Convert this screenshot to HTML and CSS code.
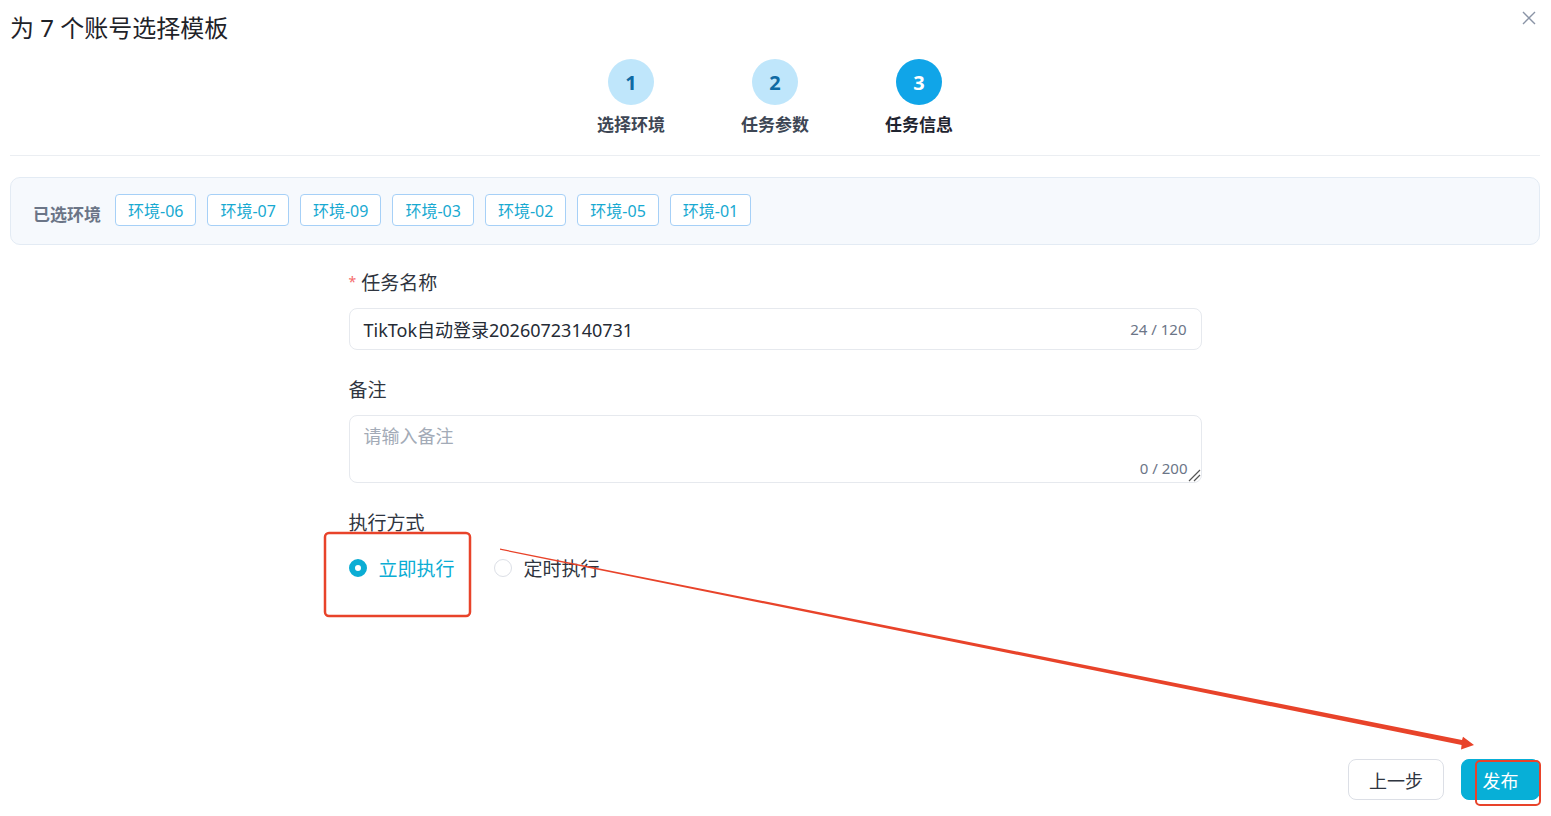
FILE: index.html
```html
<!DOCTYPE html>
<html lang="zh-CN">
<head>
    <meta charset="UTF-8">
    <meta name="viewport" content="width=device-width, initial-scale=1.0">
    <title>为 7 个账号选择模板</title>
    <link rel="stylesheet" href="styles.css">
</head>
<body>
    <div class="page">
        <div class="title-row">
            <h1 class="title">为 7 个账号选择模板</h1>
            <svg class="close" width="14" height="14" viewBox="0 0 14 14"><path d="M1 1L13 13M13 1L1 13" stroke="#8a94a6" stroke-width="1.4" fill="none"/></svg>
        </div>

        <div class="steps">
            <div class="step"><div class="step-num">1</div><div class="step-label">选择环境</div></div>
            <div class="step"><div class="step-num">2</div><div class="step-label">任务参数</div></div>
            <div class="step active"><div class="step-num">3</div><div class="step-label">任务信息</div></div>
        </div>

        <div class="env-box">
            <span class="env-label">已选环境</span>
            <div class="tags">
                <span class="tag">环境-06</span>
                <span class="tag">环境-07</span>
                <span class="tag">环境-09</span>
                <span class="tag">环境-03</span>
                <span class="tag">环境-02</span>
                <span class="tag">环境-05</span>
                <span class="tag">环境-01</span>
            </div>
        </div>

        <div class="form">
            <div class="field">
                <div class="field-label"><span class="required">*</span>任务名称</div>
                <div class="input">
                    <span class="input-text">TikTok自动登录20260723140731</span>
                    <span class="count">24 / 120</span>
                </div>
            </div>
            <div class="field">
                <div class="field-label">备注</div>
                <div class="textarea">
                    <span class="placeholder">请输入备注</span>
                    <span class="count">0 / 200</span>
                    <svg class="grip" width="14" height="14" viewBox="0 0 14 14"><path d="M13 2L2 13M13 7L7 13" stroke="#555" stroke-width="1.2" fill="none"/></svg>
                </div>
            </div>
            <div class="field">
                <div class="field-label">执行方式</div>
                <div class="radios">
                    <span class="radio checked"><span class="dot"></span>立即执行</span>
                    <span class="radio"><span class="dot"></span>定时执行</span>
                </div>
            </div>
        </div>

        <div class="footer">
            <button class="btn">上一步</button>
            <button class="btn primary">发布</button>
        </div>

        <svg class="marks" width="1551" height="816" viewBox="0 0 1551 816">
            <rect x="325" y="533" width="145" height="83" rx="4" fill="none" stroke="#e8432a" stroke-width="2.5"/>
            <rect x="1476" y="761" width="64" height="44" rx="4" fill="none" stroke="#e8432a" stroke-width="2"/>
            <polygon points="500,548.6 1462,740 1463,736.8 1474,745 1461,749.6 1461.6,745 500,549.8" fill="#e8432a"/>
        </svg>
    </div>
</body>
</html>
```

FILE: styles.css
```css
* { box-sizing: border-box; margin: 0; padding: 0; }
body {
    font-family: "Noto Sans", "Noto Sans CJK SC", sans-serif;
    color: #2f3540;
    background: #fff;
}
.page {
    position: relative;
    height: 816px;
    display: flex;
    flex-direction: column;
    padding: 0 11px 16px 10px;
    overflow: hidden;
}
.title-row {
    display: flex;
    justify-content: space-between;
    align-items: flex-start;
    padding-top: 10px;
}
.title {
    font-size: 24px;
    font-weight: 400;
    line-height: 36px;
    color: #1f2329;
}
.close { margin-top: 1px; margin-right: 4px; }

.steps {
    display: flex;
    justify-content: center;
    margin-top: 13px;
    padding-bottom: 19px;
    border-bottom: 1px solid #ebeef2;
}
.step {
    width: 144px;
    display: flex;
    flex-direction: column;
    align-items: center;
}
.step-num {
    width: 46px;
    height: 46px;
    border-radius: 50%;
    background: #bfe6fb;
    color: #0f6aa3;
    font-size: 20px;
    font-weight: 700;
    display: flex;
    align-items: center;
    justify-content: center;
}
.step-label {
    margin-top: 9px;
    font-size: 17px;
    font-weight: 700;
    line-height: 22px;
    color: #3d4654;
}
.step.active .step-num { background: #10a5e8; color: #fff; }
.step.active .step-label { color: #1f2430; }

.env-box {
    margin-top: 21px;
    display: flex;
    align-items: center;
    padding: 16px 22px 18px;
    background: #f6f9fd;
    border: 1px solid #e3ebf4;
    border-radius: 10px;
}
.env-label {
    font-size: 17px;
    font-weight: 700;
    color: #6b7587;
    line-height: 22px;
    padding-top: 10px;
    margin-right: 14px;
}
.tags { display: flex; gap: 11px; }
.tag {
    height: 32px;
    padding: 0 12px;
    display: flex;
    align-items: center;
    font-size: 16px;
    color: #17a9d1;
    background: #fff;
    border: 1px solid #a6d0f7;
    border-radius: 4px;
}

.form {
    width: 853px;
    margin: 25px auto 0;
}
.field { margin-bottom: 28px; }
.field-label {
    font-size: 19px;
    line-height: 24px;
    color: #2f3540;
    margin-bottom: 13px;
}
.required {
    color: #f56c6c;
    font-size: 14px;
    margin-right: 5px;
    vertical-align: 3px;
}
.input {
    height: 42px;
    border: 1px solid #e6e9ee;
    border-radius: 8px;
    display: flex;
    align-items: center;
    justify-content: space-between;
    padding: 0 14px;
}
.input-text { font-size: 18px; color: #252b35; }
.count { font-size: 15px; color: #6b7587; }
.textarea {
    position: relative;
    height: 68px;
    border: 1px solid #e6e9ee;
    border-radius: 8px;
    display: flex;
    flex-direction: column;
    justify-content: space-between;
    padding: 8px 13px 4px 14px;
}
.placeholder { font-size: 18px; line-height: 24px; color: #a3abb7; }
.textarea .count { align-self: flex-end; line-height: 20px; }
.grip { position: absolute; right: 0; bottom: 0; }

.radios { display: flex; align-items: center; height: 34px; margin-top: 16px; }
.radio {
    display: inline-flex;
    align-items: center;
    gap: 12px;
    font-size: 19px;
    color: #2f3540;
    margin-right: 39px;
}
.radio .dot {
    width: 18px;
    height: 18px;
    border-radius: 50%;
    border: 1px solid #dcdfe6;
    background: #fff;
}
.radio.checked { color: #0badd4; }
.radio.checked .dot {
    border: 6px solid #0badd4;
    background: #fff;
}

.footer {
    margin-top: auto;
    display: flex;
    justify-content: flex-end;
    gap: 17px;
}
.btn {
    height: 41px;
    padding: 0 20px;
    font-family: inherit;
    font-size: 18px;
    color: #2f3540;
    background: #fff;
    border: 1px solid #dcdfe6;
    border-radius: 8px;
    cursor: pointer;
}
.btn.primary {
    width: 79px;
    padding: 0;
    color: #fff;
    background: #07afd7;
    border-color: #07afd7;
}

.marks { position: absolute; top: 0; left: 0; pointer-events: none; }
```
